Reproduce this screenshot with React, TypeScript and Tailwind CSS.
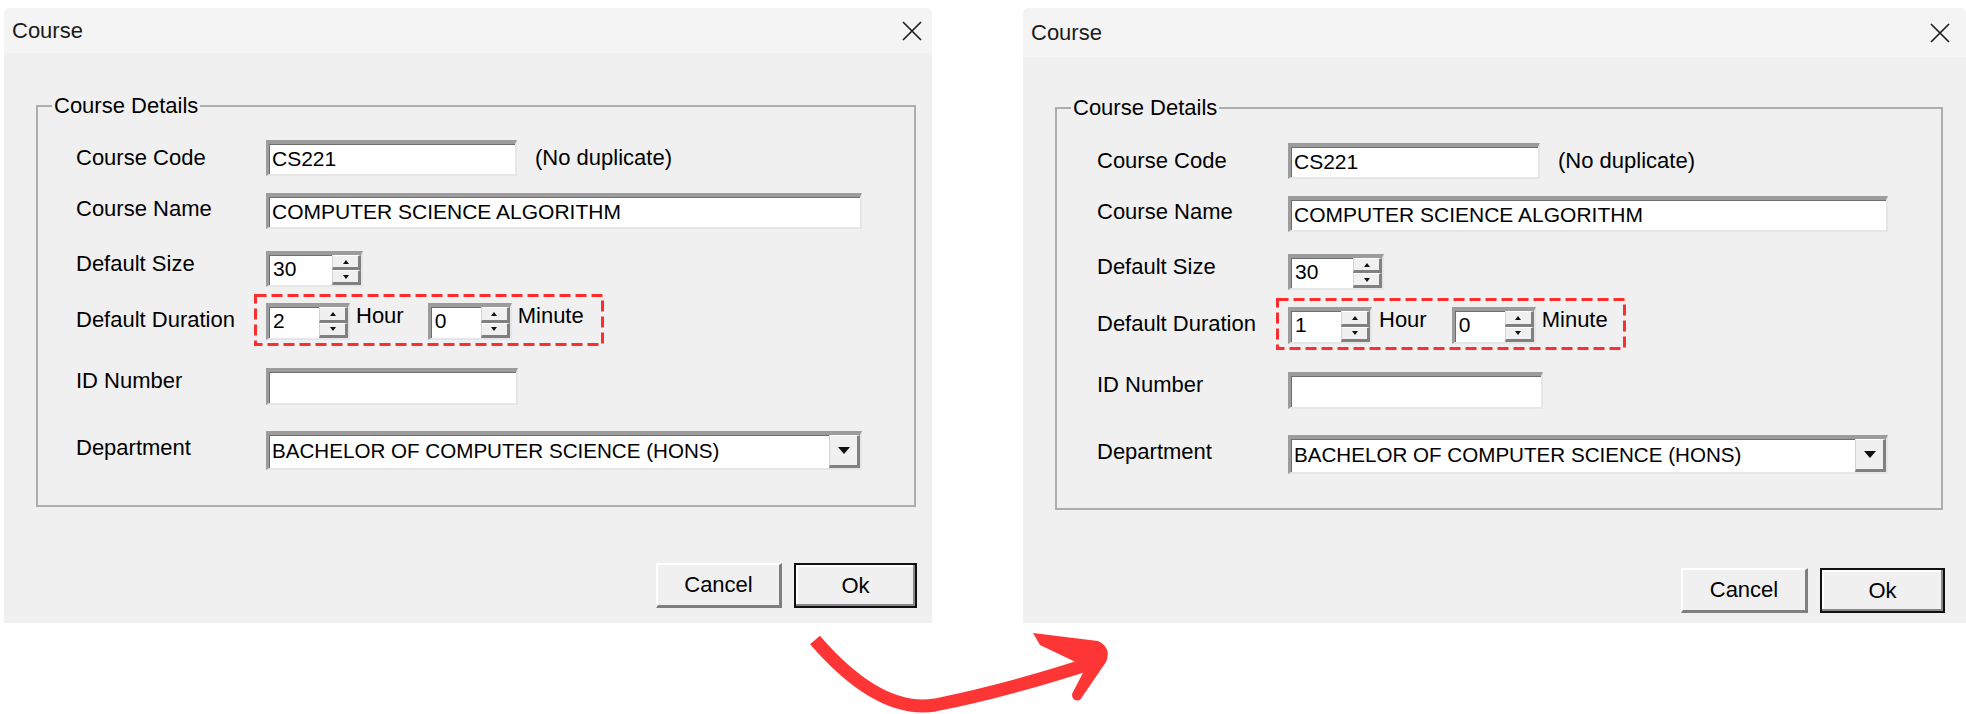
import type { ReactNode } from 'react'

type Metrics = {
  frame: string
  bar: string
  group: string
  inner: string
  labelCol: string
  rowMt: string[]
  code: string
  name: string
  size: string
  id: string
  dept: string
  hourGap: string
  minGap: string
  buttons: string
  cancel: string
  ok: string
}

const before: Metrics = {
  frame: 'ml-[4px] w-[928px]',
  bar: 'h-[45px] pr-[10px]',
  group: 'mt-[41px] ml-[32px] w-[880px]',
  inner: 'pl-[38px] pb-[35px]',
  labelCol: 'w-[190px]',
  rowMt: ['mt-[22px]', 'mt-[17px]', 'mt-[22px]', 'mt-[16px]', 'mt-[28px]', 'mt-[26px]'],
  code: 'w-[251px]',
  name: 'w-[596px]',
  size: 'w-[97px]',
  id: 'w-[252px]',
  dept: 'w-[596px]',
  hourGap: 'ml-[6px]',
  minGap: 'ml-[24px]',
  buttons: 'mt-[56px] pr-[15px]',
  cancel: 'w-[126px]',
  ok: 'w-[123px]',
}

const after: Metrics = {
  frame: 'ml-[91px] w-[943px]',
  bar: 'h-[49px] pr-[16px]',
  group: 'mt-[39px] ml-[32px] w-[888px]',
  inner: 'pl-[40px] pb-[34px]',
  labelCol: 'w-[191px]',
  rowMt: ['mt-[23px]', 'mt-[17px]', 'mt-[22px]', 'mt-[17px]', 'mt-[28px]', 'mt-[26px]'],
  code: 'w-[252px]',
  name: 'w-[600px]',
  size: 'w-[96px]',
  id: 'w-[255px]',
  dept: 'w-[600px]',
  hourGap: 'ml-[7px]',
  minGap: 'ml-[25px]',
  buttons: 'mt-[58px] pr-[21px]',
  cancel: 'w-[127px]',
  ok: 'w-[125px]',
}

// classic sunken edit border
const sunken =
  'flex bg-white text-[21px] border-t-[4px] border-l-[3px] border-r-[2px] border-b-[2px] border-t-[#9c9c9c] border-l-[#9c9c9c] border-r-[#e6e6e6] border-b-[#e6e6e6] shadow-[inset_1px_1px_0_#6e6e6e]'

const raised =
  'bg-[#f0f0f0] border-t border-l border-t-white border-l-[#d4d4d4] border-r-[3px] border-b-[3px] border-r-[#808080] border-b-[#808080]'

function Tri({ down }: { down?: boolean }) {
  return (
    <svg width="6" height="4" viewBox="0 0 6 4" className="block">
      <polygon points={down ? '0,0 6,0 3,4' : '3,0 6,4 0,4'} fill="#111" />
    </svg>
  )
}

function Spin({ value, className }: { value: string; className: string }) {
  return (
    <div className={`${sunken} ${className}`}>
      <span className="flex-1 pl-[4px] pt-[2px]">{value}</span>
      <div className="flex w-[29px] flex-col">
        <div className={`flex flex-1 items-center justify-center ${raised}`}>
          <Tri />
        </div>
        <div className={`flex flex-1 items-center justify-center ${raised}`}>
          <Tri down />
        </div>
      </div>
    </div>
  )
}

function Row({
  label,
  mt,
  col,
  pt,
  children,
}: {
  label: string
  mt: string
  col: string
  pt: string
  children: ReactNode
}) {
  return (
    <div className={`flex items-start ${mt}`}>
      <div className={`${col} ${pt}`}>{label}</div>
      {children}
    </div>
  )
}

function Dialog({ m, hours }: { m: Metrics; hours: string }) {
  return (
    <div className={`mt-[8px] flex h-[615px] flex-col rounded-t-[6px] bg-[#f0f0f0] ${m.frame}`}>
      {/* Title bar */}
      <div className={`flex items-center justify-between rounded-t-[6px] bg-[#f4f4f4] pl-[8px] ${m.bar}`}>
        <span className="text-[#1b1b1b]">Course</span>
        <svg width="20" height="20" viewBox="0 0 20 20" className="block">
          <path d="M1 1 L19 19 M19 1 L1 19" stroke="#1f1f1f" strokeWidth="1.7" />
        </svg>
      </div>

      {/* Course Details */}
      <fieldset className={`border-2 border-[#adadad] ${m.group}`}>
        <legend className="ml-[14px] px-[2px] leading-[24px]">Course Details</legend>
        <div className={`flex flex-col ${m.inner}`}>
          <Row label="Course Code" mt={m.rowMt[0]} col={m.labelCol} pt="pt-[6px]">
            <div className={`${sunken} h-[36px] ${m.code}`}>
              <span className="pl-[3px] pt-[3px]">CS221</span>
            </div>
            <span className="ml-[18px] pt-[6px]">(No duplicate)</span>
          </Row>
          <Row label="Course Name" mt={m.rowMt[1]} col={m.labelCol} pt="pt-[4px]">
            <div className={`${sunken} h-[36px] ${m.name}`}>
              <span className="pl-[3px] pt-[3px]">COMPUTER SCIENCE ALGORITHM</span>
            </div>
          </Row>
          <Row label="Default Size" mt={m.rowMt[2]} col={m.labelCol} pt="pt-[1px]">
            <Spin value="30" className={`h-[36px] ${m.size}`} />
          </Row>
          <Row label="Default Duration" mt={m.rowMt[3]} col={m.labelCol} pt="pt-[5px]">
            <div className="relative flex items-start">
              <Spin value={hours} className="h-[37px] w-[84px]" />
              <span className={`pt-[1px] ${m.hourGap}`}>Hour</span>
              <Spin value="0" className={`h-[37px] w-[84px] ${m.minGap}`} />
              <span className="ml-[6px] pt-[1px]">Minute</span>
              <svg
                width="350"
                height="52"
                className="pointer-events-none absolute -left-[12px] -top-[9px] block"
              >
                <rect
                  x="1.5"
                  y="1.5"
                  width="347"
                  height="49"
                  fill="none"
                  stroke="#ff2e2e"
                  strokeWidth="3"
                  strokeDasharray="11 5"
                />
              </svg>
            </div>
          </Row>
          <Row label="ID Number" mt={m.rowMt[4]} col={m.labelCol} pt="pt-[1px]">
            <div className={`${sunken} h-[37px] ${m.id}`} />
          </Row>
          <Row label="Department" mt={m.rowMt[5]} col={m.labelCol} pt="pt-[5px]">
            <div className={`${sunken} h-[39px] ${m.dept}`}>
              <span className="flex-1 pl-[3px] pt-[4px] text-[20.6px]">
                BACHELOR OF COMPUTER SCIENCE (HONS)
              </span>
              <div className={`flex w-[31px] items-center justify-center ${raised}`}>
                <svg width="12" height="7" viewBox="0 0 12 7" className="block">
                  <polygon points="0,0 12,0 6,7" fill="#111" />
                </svg>
              </div>
            </div>
          </Row>
        </div>
      </fieldset>

      {/* Buttons */}
      <div className={`flex justify-end gap-[12px] ${m.buttons}`}>
        <button
          className={`h-[45px] border-t-2 border-l-2 border-t-white border-l-white border-r-[3px] border-b-[3px] border-r-[#7f7f7f] border-b-[#7f7f7f] bg-[#f0f0f0] ${m.cancel}`}
        >
          Cancel
        </button>
        <button
          className={`h-[45px] border-2 border-[#111] bg-[#f0f0f0] shadow-[inset_-2px_-2px_0_#8a8a8a,inset_2px_2px_0_#ffffff] ${m.ok}`}
        >
          Ok
        </button>
      </div>
    </div>
  )
}

export default function App() {
  return (
    <div className="h-[714px] w-[1966px] overflow-hidden bg-white font-['Liberation_Sans',Arial,sans-serif] text-[22px] leading-[24px] text-black">
      <div className="flex items-start">
        <Dialog m={before} hours="2" />
        <Dialog m={after} hours="1" />
      </div>

      {/* arrow from old to new */}
      <svg width="310" height="86" viewBox="0 0 310 86" className="ml-[805px] mt-[5px] block">
        <path
          d="M10 12 Q74 86 130 77 Q205 62 293 33"
          fill="none"
          stroke="#fe3535"
          strokeWidth="13"
        />
        <path
          d="M228 5 L293 13 Q307 20 301 34 L275 72 Q267 74 267 66 L281 39 L235 17 Z"
          fill="#fe3535"
        />
      </svg>
    </div>
  )
}
